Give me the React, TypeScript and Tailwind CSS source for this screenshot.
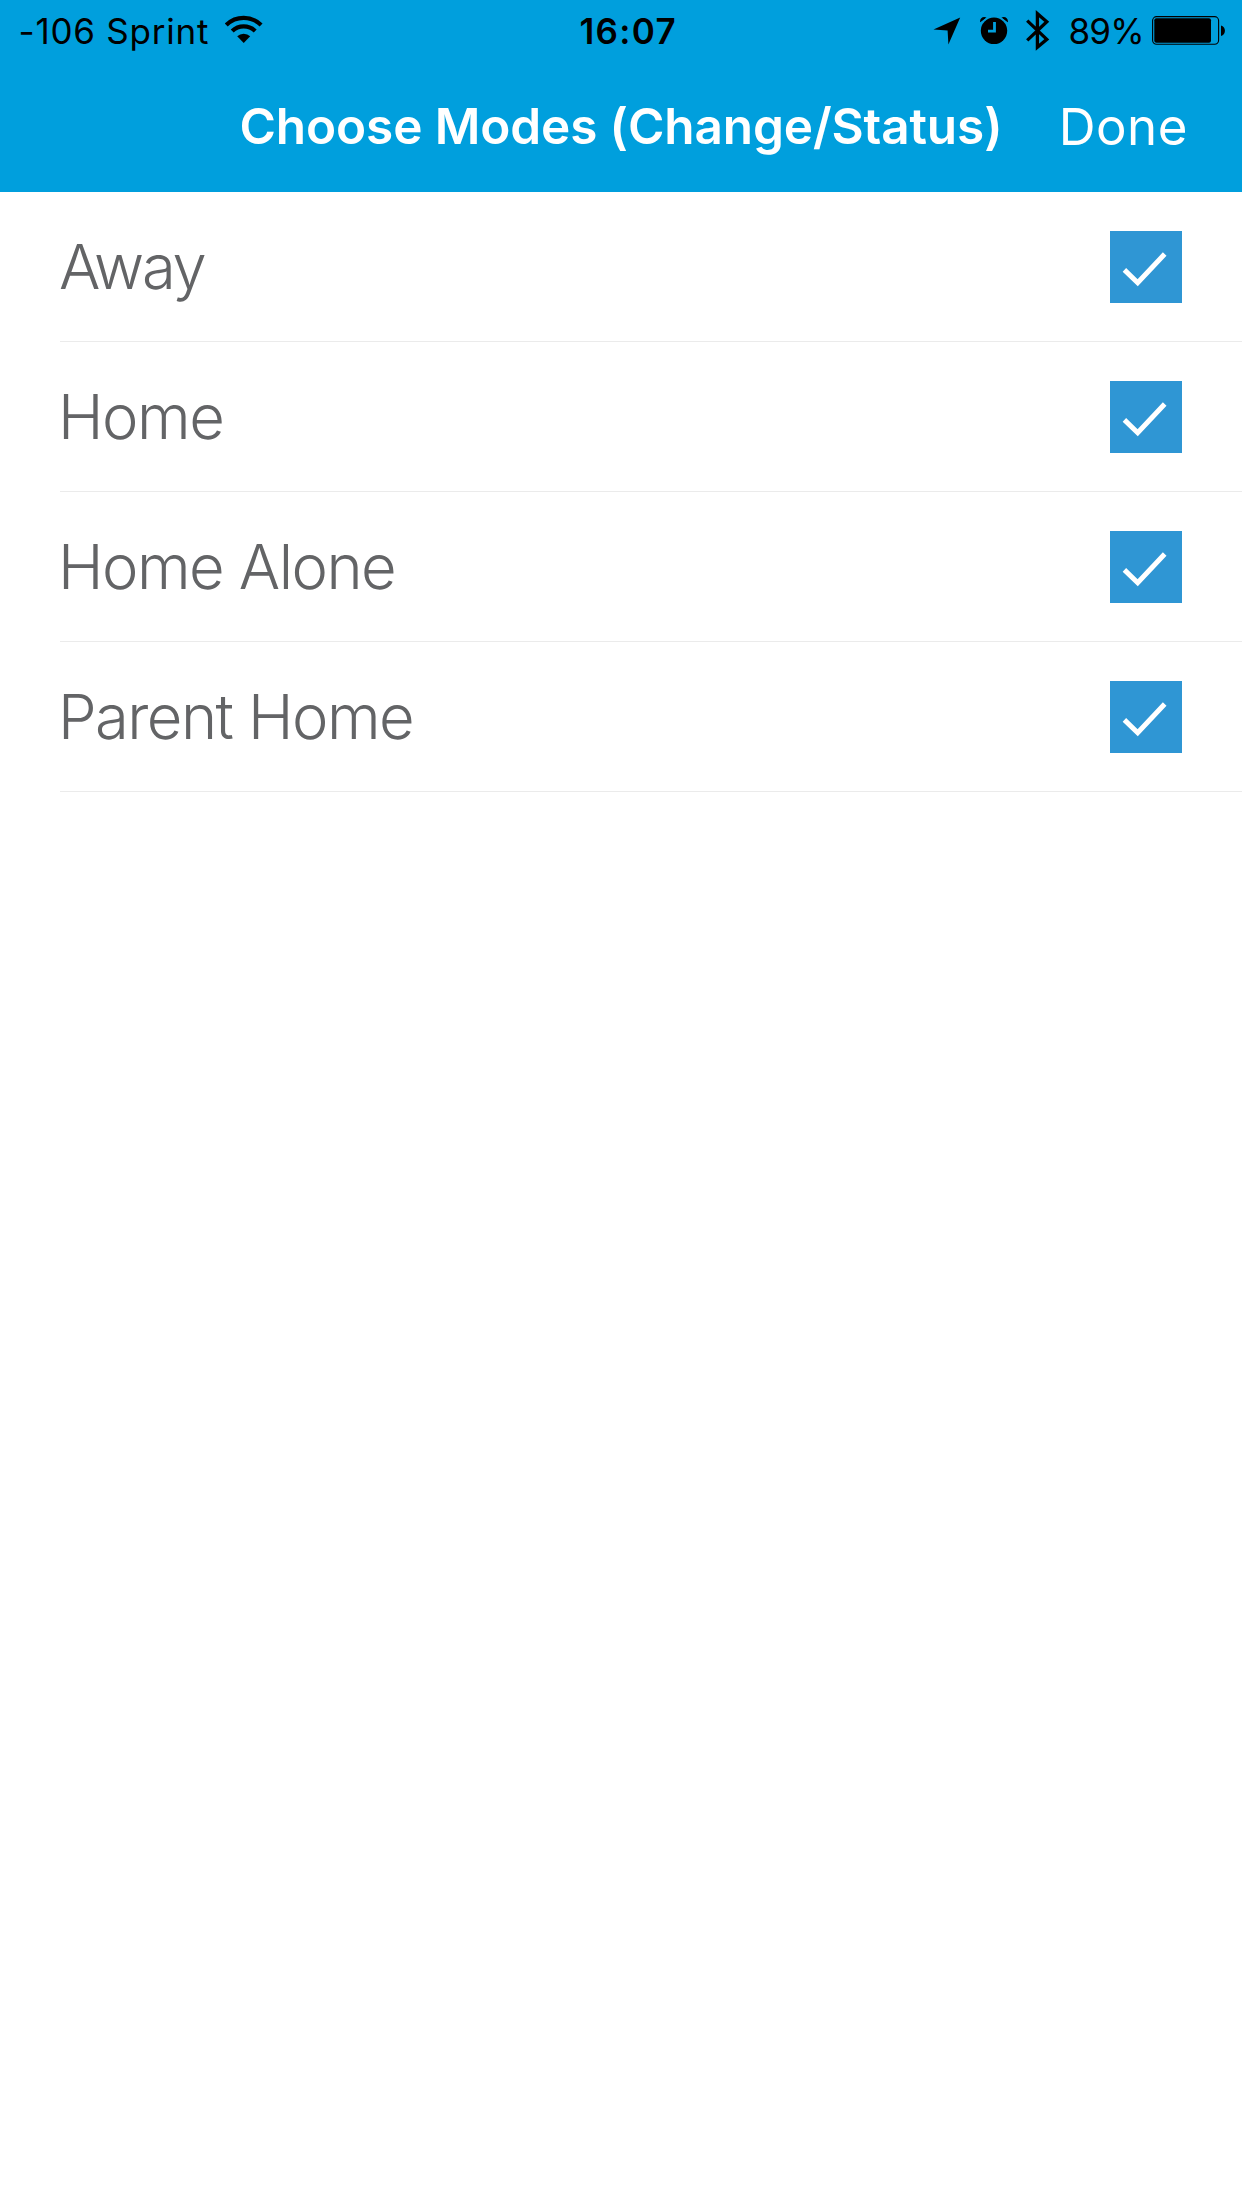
import clsx from "clsx";

interface Mode {
    name: string;
    selected: boolean;
    labelClass: string;
}

const MODES: Mode[] = [
    { name: "Away", selected: true, labelClass: "-ml-px tracking-[-2.2px]" },
    { name: "Home", selected: true, labelClass: "-ml-0.5 tracking-[-1.5px]" },
    { name: "Home Alone", selected: true, labelClass: "-ml-0.5 tracking-[-1.55px]" },
    { name: "Parent Home", selected: true, labelClass: "-ml-0.5 tracking-[-1.55px]" },
];

function WifiIcon() {
    return (
        <svg width="38" height="29" viewBox="0 0 38 29" fill="none" stroke="currentColor" strokeWidth="4.2" className="mb-[3px]">
            <path d="M1.3 10A25 25 0 0 1 36.1 10" />
            <path d="M7.2 16.1A16.5 16.5 0 0 1 30.2 16.1" />
            <path d="M18.7 28L12.2 21.3A9.3 9.3 0 0 1 25.2 21.3Z" fill="currentColor" stroke="none" />
        </svg>
    );
}

function LocationIcon() {
    return (
        <svg width="28" height="28" viewBox="0 0 28 28" fill="currentColor">
            <path d="M0.5 12.4L27.2 0.6L15.4 27.6L14.6 13.6Z" />
        </svg>
    );
}

function AlarmIcon() {
    return (
        <svg width="28" height="29" viewBox="0 0 28 29" fill="currentColor" className="mb-px">
            <circle cx="14" cy="14.8" r="13.2" />
            <path d="M0.2 6.4C-0.6 2.6 2.8 -0.2 6.6 1.6L0.2 6.4ZM27.8 6.4C28.6 2.6 25.2 -0.2 21.4 1.6L27.8 6.4Z" />
            <path d="M0 7.4L7.2 2M28 7.4L20.8 2" className="stroke-[#009fdd]" strokeWidth="1.2" />
            <path d="M14.5 6V15.2H8" fill="none" className="stroke-[#009fdd]" strokeWidth="2.8" />
        </svg>
    );
}

function BluetoothIcon() {
    return (
        <svg width="24" height="41" viewBox="0 0 24 41" fill="none" stroke="currentColor" strokeWidth="3.3" className="mb-px">
            <path d="M1.2 10.6L20.8 29.3L11.4 37.2V3.7L20.8 11.8L1.2 30.4" />
        </svg>
    );
}

function BatteryIcon() {
    return (
        <svg width="73" height="29" viewBox="0 0 73 29" fill="currentColor" className="mb-px">
            <rect x="0.6" y="0.6" width="66" height="27.6" rx="4" fill="none" stroke="currentColor" strokeWidth="1.1" />
            <rect x="2.3" y="2.2" width="56.7" height="24.5" rx="2" />
            <path d="M69 9.5C74.2 11 74.2 18.5 69 20Z" />
        </svg>
    );
}

function StatusBar() {
    return (
        <div className="flex h-[62px] items-center pr-[17px] pl-[18.5px] text-[35px] text-black">
            <div className="flex w-[561px] items-center gap-4">
                <span className="tracking-[0.78px]">-106 Sprint</span>
                <WifiIcon />
            </div>
            <span className="font-semibold tracking-[1.3px]">16:07</span>
            <div className="ml-auto flex items-center">
                <LocationIcon />
                <div className="ml-[19px]">
                    <AlarmIcon />
                </div>
                <div className="ml-[18px]">
                    <BluetoothIcon />
                </div>
                <span className="ml-[18.5px] w-[83.5px] tracking-[-0.8px]">89%</span>
                <BatteryIcon />
            </div>
        </div>
    );
}

function Checkbox({ checked }: { checked: boolean }) {
    return (
        <div className={clsx("size-[72px]", checked ? "bg-[#2f96d4]" : "border border-[#2f96d4]")}>
            {checked && (
                <svg width="72" height="72" viewBox="0 0 72 72" fill="none" stroke="white" strokeWidth="5">
                    <path d="M14.4 38.9L27.7 51.7L54.7 23" />
                </svg>
            )}
        </div>
    );
}

export default function App() {
    return (
        <div className="min-h-screen w-full bg-white font-['Inter','Liberation_Sans',sans-serif]">
            <header className="bg-[#009fdd]">
                <StatusBar />
                <div className="flex h-[130px] items-center justify-between pr-[54px] pb-0.5 pl-[239.5px] whitespace-nowrap text-white">
                    <h1 className="text-[49.5px] font-semibold tracking-[-0.12px]">Choose Modes (Change/Status)</h1>
                    <button className="pt-0.5 text-[51px] font-normal tracking-[0.5px]">Done</button>
                </div>
            </header>
            <ul className="pl-[60px]">
                {MODES.map((mode) => (
                    <li key={mode.name} className="flex h-[150px] items-center justify-between border-b border-[#ebebeb] pr-[60px]">
                        <span className={clsx("pt-0.5 text-[61.5px] font-[330] text-[#636466]", mode.labelClass)}>{mode.name}</span>
                        <Checkbox checked={mode.selected} />
                    </li>
                ))}
            </ul>
        </div>
    );
}
